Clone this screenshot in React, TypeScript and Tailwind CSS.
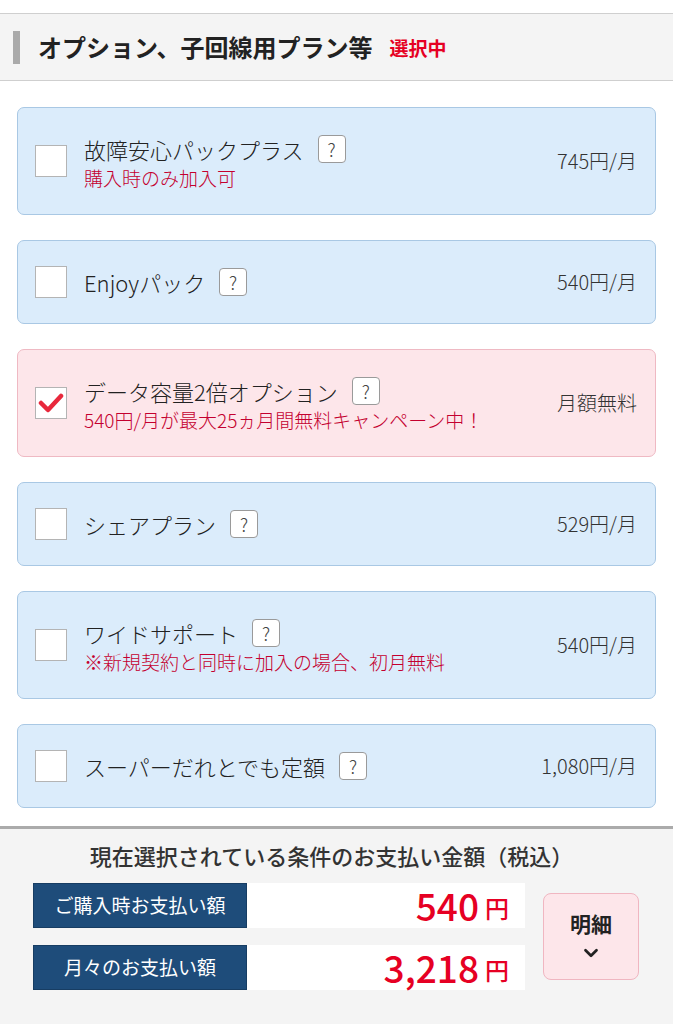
import { ChevronDown } from "lucide-react";

type Option = {
  name: string;
  note?: string;
  price: string;
  checked?: boolean;
};

const options: Option[] = [
  { name: "故障安心パックプラス", note: "購入時のみ加入可", price: "745円/月" },
  { name: "Enjoyパック", price: "540円/月" },
  {
    name: "データ容量2倍オプション",
    note: "540円/月が最大25ヵ月間無料キャンペーン中！",
    price: "月額無料",
    checked: true,
  },
  { name: "シェアプラン", price: "529円/月" },
  { name: "ワイドサポート", note: "※新規契約と同時に加入の場合、初月無料", price: "540円/月" },
  { name: "スーパーだれとでも定額", price: "1,080円/月" },
];

function Check({ on }: { on?: boolean }) {
  return (
    <div className="w-8 h-8 shrink-0 bg-white border border-[#b4b4b4] flex items-center justify-center">
      {on && (
        <svg width="26" height="22" viewBox="0 0 26 22">
          <path
            d="M3 11 L10 18 L23 4"
            fill="none"
            stroke="#e8283c"
            strokeWidth="4.5"
            strokeLinecap="round"
            strokeLinejoin="round"
          />
        </svg>
      )}
    </div>
  );
}

function Help() {
  return (
    <span className="inline-flex w-7 h-7 shrink-0 items-center justify-center bg-white border border-[#9a9a9a] rounded-[4px] text-[18px] leading-none text-[#444] font-light">
      ?
    </span>
  );
}

export default function App() {
  return (
    <div
      className="w-[673px] h-[1024px] overflow-hidden bg-white text-[#222]"
      style={{ fontFamily: '"Noto Sans CJK JP", "Noto Sans", sans-serif' }}
    >
      <div className="h-[13px]" />
      {/* section header */}
      <div className="h-[68px] bg-[#f4f4f4] border-y border-[#cfcfcf] flex items-center pl-[13px]">
        <div className="w-[7px] h-[33px] bg-[#aaaaaa]" />
        <h2 className="ml-[18px] text-[24px] font-bold text-[#222]">
          オプション、子回線用プラン等
        </h2>
        <span className="ml-[17px] mt-[2px] text-[19px] font-bold text-[#e60023]">選択中</span>
      </div>

      {/* options */}
      <div className="px-[17px] pt-[26px] flex flex-col gap-[25px]">
        {options.map((o) => (
          <label
            key={o.name}
            className={
              "flex items-center rounded-[7px] border pl-[17px] pr-[18px] py-[24px] cursor-pointer " +
              (o.checked
                ? "bg-[#fde6ea] border-[#efb9c3]"
                : "bg-[#dbecfb] border-[#a9c8e4]")
            }
          >
            <Check on={o.checked} />
            <div className="ml-[17px] flex-1">
              <div className="flex items-center h-[34px]">
                <span className="text-[22px] font-light text-[#222]">{o.name}</span>
                <span className="ml-[14px]">
                  <Help />
                </span>
              </div>
              {o.note && (
                <div className="text-[19px] leading-[24px] font-light text-[#c4002f]">{o.note}</div>
              )}
            </div>
            <div className="text-[20px] font-light text-[#333] whitespace-nowrap">{o.price}</div>
          </label>
        ))}
      </div>

      {/* payment summary */}
      <div className="mt-[18px] border-t-[3px] border-[#ababab] bg-[#f4f4f4] h-[220px] pt-[10px]">
        <p className="text-center text-[22px] font-medium text-[#333] pr-[10px]">
          現在選択されている条件のお支払い金額（税込）
        </p>
        <div className="mt-[11px] px-[33px] flex items-center gap-[18px]">
          <div className="flex flex-col gap-[17px] w-[492px]">
            {[
              ["ご購入時お支払い額", "540"],
              ["月々のお支払い額", "3,218"],
            ].map(([label, amount]) => (
              <div key={label} className="flex h-[45px]">
                <div className="w-[214px] bg-[#1e4c7a] border border-[#173d63] text-white text-[19px] flex items-center justify-center">
                  {label}
                </div>
                <div className="flex-1 bg-white flex items-end justify-end pr-[16px] pb-[2px] text-[#e60023] font-medium">
                  <span className="text-[37px] leading-[42px]">{amount}</span>
                  <span className="ml-[6px] text-[24px] leading-[36px]">円</span>
                </div>
              </div>
            ))}
          </div>
          <button className="w-[96px] h-[87px] rounded-[8px] bg-[#fde6ea] border border-[#f0b6c1] flex flex-col items-center justify-center">
            <span className="text-[21px] font-bold text-[#222] leading-[26px]">明細</span>
            <ChevronDown size={22} strokeWidth={3} className="text-[#222] mt-[6px]" />
          </button>
        </div>
      </div>
    </div>
  );
}
